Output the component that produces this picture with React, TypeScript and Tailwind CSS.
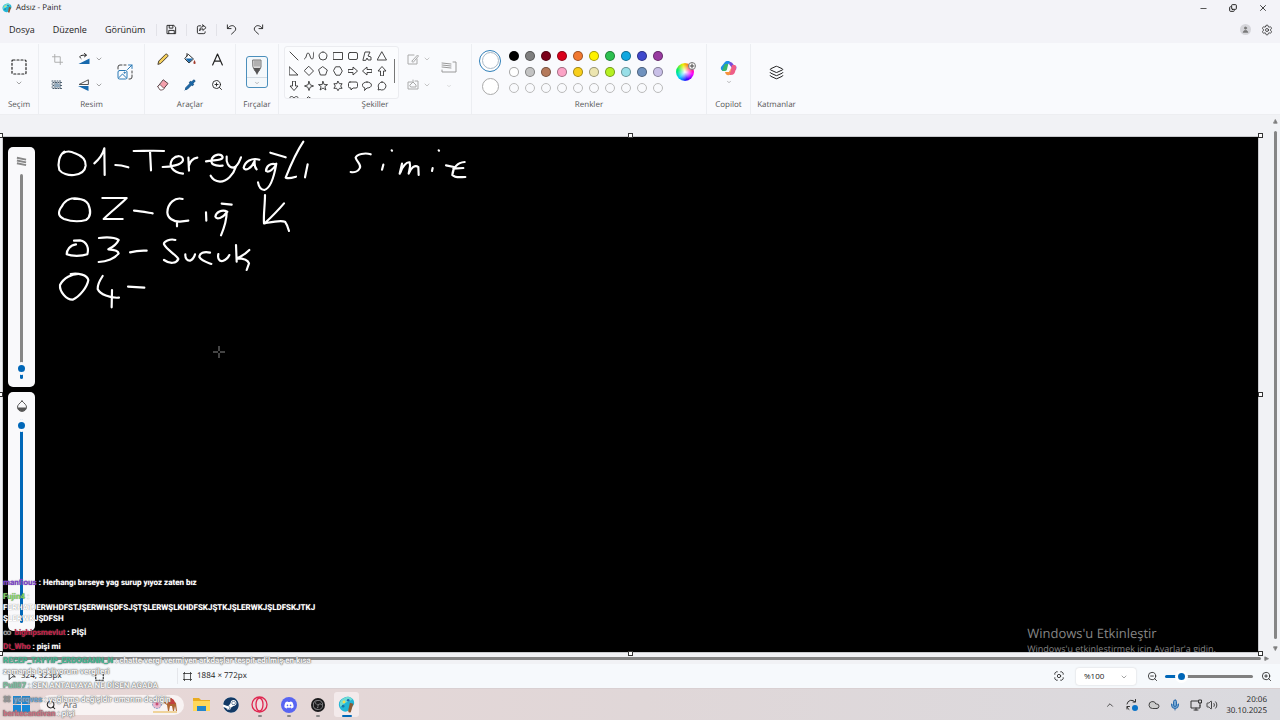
import type { ReactNode } from "react";
import clsx from "clsx";
import { ChevronDown, ChevronUp, Cloud, Copy, Layers, Mic, Minus, Pipette, Search, Settings, Volume2, X, ZoomIn, ZoomOut } from "lucide-react";
import { FaDiscord, FaSteam } from "react-icons/fa";
import { SiObsstudio } from "react-icons/si";

const palette = [
  ["#000000", "#7f7f7f", "#7a0019", "#d9001b", "#f07830", "#fff200", "#2dc050", "#12a8e0", "#3f48cc", "#983ba0"],
  ["#ffffff", "#c3c3c3", "#b57a5c", "#fba3c6", "#f8cf1c", "#ece5b0", "#b5f022", "#99dfe8", "#7092be", "#c8bfe7"],
];

const shapes = [
  "M1 1L9 9",
  "M0 8C3 8 2 2 4 2S6 8 8 8 9 4 10 1",
  "M5 1a4 4 0 1 0 0 8a4 4 0 1 0 0-8",
  "M.5 1.5h9v7h-9z",
  "M2 1.5h6a1.500 1.500 0 0 1 1.500 1.500v4a1.500 1.500 0 0 1-1.500 1.500H2A1.500 1.500 0 0 1 .5 7V3A1.500 1.500 0 0 1 2 1.500z",
  "M1 9L3 1h5L6 5l3 1v3H6L5 7 4 9z",
  "M5 1L9.500 9H.5z",
  "M.5 1L9 9H.5z",
  "M5 .5L9.500 5 5 9.500.5 5z",
  "M5 .8L9.300 4 7.600 9H2.400L.7 4z",
  "M3 .8h4L9.300 5 7 9.200H3L.7 5z",
  "M.5 3.500H5V1l4.500 4L5 9V6.500H.5z",
  "M9.500 3.500H5V1L.5 5 5 9V6.500h4.500z",
  "M3.500 9.500V5H1L5 .5 9 5H6.500v4.500z",
  "M3.500.5V5H1l4 4.500L9 5H6.500V.5z",
  "M5 .5L6.200 3.800 9.500 5 6.200 6.200 5 9.500 3.800 6.200.5 5l3.300-1.200z",
  "M5 .5l1.200 3.100h3.300L6.900 5.600l1 3.400L5 7 2.100 9l1-3.400L.5 3.600h3.300z",
  "M5 .3l1.400 2.400h2.700L7.700 5l1.400 2.300H6.400L5 9.700 3.600 7.300H.9L2.300 5 .9 2.700h2.700z",
  "M2 1h6a1.500 1.500 0 0 1 1.500 1.500v3A1.500 1.500 0 0 1 8 7H5L3 9V7H2A1.500 1.500 0 0 1 .5 5.500v-3A1.500 1.500 0 0 1 2 1z",
  "M5 1c6 0 6 6 0 6L2.500 9.500 3 7C-1.500 5.500 0 1 5 1z",
  "M5 1a4 4 0 1 1-2 7.500L1 9l.7-2A4 4 0 0 1 5 1z",
  "M5 9L1 5C-1 1 3-1 5 2c2-3 6-1 4 3z",
  "M4 1L1 4h2L2 9l6-4-2-1 1-1z",
];

/* One entry per pen stroke, in the drawing's own units (3 per pixel). */
const strokes = [
  "M193 80C178 90 172 115 178 135C185 145 205 152 222 150C240 148 255 140 257 122C258 105 245 92 225 85C212 78 200 78 190 84",
  "M283 115C295 105 308 90 313 70L314 150",
  "M346 120C358 120 372 123 385 127",
  "M401 78C430 78 460 76 492 78M450 78L453 136",
  "M488 126C510 126 545 120 549 106C549 90 530 90 517 103C505 120 515 142 549 146",
  "M565 98L567 137M566 124C570 108 578 100 592 98",
  "M618 109C640 104 668 108 668 96C664 85 645 87 636 100C628 118 645 124 668 122",
  "M680 95C678 112 685 128 700 128C714 125 718 110 723 97M708 124C700 150 680 170 660 170C645 168 636 160 632 152",
  "M778 104C755 97 735 110 731 128C735 140 755 130 764 108C763 120 764 128 770 133",
  "M828 118C810 112 798 126 798 138C806 144 822 132 829 116C824 145 814 190 793 195C780 194 776 183 774 172M811 83L857 97",
  "M910 50C890 80 870 125 857 158C868 162 878 158 888 155M923 118L915 157",
  "M1112 88C1095 82 1070 88 1067 98C1070 110 1084 118 1080 128C1075 140 1062 143 1052 141",
  "M1150 119L1146 134M1175 76L1176 77",
  "M1199 146L1206 116M1201 143C1206 125 1220 110 1229 112C1233 124 1227 136 1226 146C1232 128 1245 118 1255 126L1256 150",
  "M1298 129L1296 138M1316 76L1317 77",
  "M1338 121L1362 126M1394 111C1372 112 1358 130 1357 150C1366 160 1382 156 1396 156M1360 131L1390 129",
  "M240 222C215 215 195 225 185 245C172 262 175 275 192 282C215 290 240 290 258 285C273 275 272 255 265 238C258 225 240 220 222 222",
  "M307 219L380 219C360 240 330 262 311 282L368 282",
  "M402 257C420 258 440 262 458 265",
  "M548 222C525 215 503 235 502 262C503 280 520 290 540 290L565 287M531 290L531 304",
  "M618 262L619 287",
  "M682 260C665 252 648 262 646 275C650 285 668 280 680 262C680 285 672 310 663 331M665 236L695 239",
  "M795 210C795 240 790 270 792 295M852 235C835 255 810 280 794 295C820 290 840 285 855 290C862 300 865 310 867 318",
  "M228 358C210 360 200 375 200 388C215 394 245 394 262 388C267 370 262 350 240 346L222 347",
  "M297 339C320 336 345 338 356 345C350 358 335 368 325 373C340 374 355 378 356 385C345 400 320 410 296 411",
  "M390 382C405 378 420 376 440 377",
  "M526 345C510 340 490 350 492 358C500 375 530 390 535 402C530 415 510 418 492 405",
  "M556 388C555 400 562 408 570 407C580 403 583 395 585 388",
  "M630 383C612 378 598 385 598 396C605 408 620 412 634 417",
  "M655 387C652 400 658 410 668 408C680 404 685 397 688 390",
  "M708 360L710 410M748 375C735 388 720 396 711 400C730 400 744 405 747 415L740 435",
  "M240 447C215 445 190 460 180 480C178 500 200 525 218 524C240 515 262 485 265 465C262 450 235 443 212 447",
  "M308 453C298 468 292 480 293 492C300 508 330 520 357 518M336 495L335 547",
  "M384 485L433 488",
];

const messages = [
  { name: "manfious", color: "text-[#7d3fd0]", text: "Herhangı bırseye yag surup yıyoz zaten bız" },
  { name: "Fujin4", color: "text-[#7fd35c]", text: "FERHATJERWHDFSTJŞERWHŞDFSJŞTŞLERWŞLKHDFSKJŞTKJŞLERWKJŞLDFSKJTKJ ŞLERWKJŞDFSH" },
  { name: "bighipsmevlut", color: "text-[#c0143c]", text: "PİŞİ", badge: "∞" },
  { name: "Dt_Who", color: "text-[#c0143c]", text: "pişi mi" },
  { name: "RECEP_TAYYIP_ERDOGANN_N", color: "text-[#3fb893]", text: "chatte vergi vermiyen arkdaşlar tespit edilmiş en kısa zamanda bekliyorum vergileri", faded: true },
  { name: "Pull07", color: "text-[#7cc4a4]", text: "SEN ANTALYAYA NE DİSEN AGADA", faded: true },
  { name: "yorqves", color: "text-[#6fa8d8]", text: "yağlama değişldir umarım dediğin", badge: "⌘", faded: true },
  { name: "berkecandivan", color: "text-[#cc6f80]", text: "pişi", faded: true },
];

function Icon({ size = 12, box = 12, children, className }: { size?: number; box?: number; children: ReactNode; className?: string }) {
  return (
    <svg width={size} height={size} viewBox={`0 0 ${box} ${box}`} fill="none" stroke="currentColor" strokeLinejoin="round" strokeLinecap="round" className={clsx("shrink-0", className)}>
      {children}
    </svg>
  );
}

function IconButton({ label, className, children }: { label: string; className?: string; children: ReactNode }) {
  return (
    <button type="button" aria-label={label} className={clsx("grid shrink-0 place-items-center", className)}>
      {children}
    </button>
  );
}

function Chevron({ className }: { className?: string }) {
  return <ChevronDown size={8} strokeWidth={2} className={clsx("text-[#777]", className)} />;
}

function Group({ label, className, children }: { label: string; className: string; children: ReactNode }) {
  return (
    <section aria-label={label} className={clsx("flex shrink-0 flex-col border-r border-[#eceef2] pt-px", className)}>
      <div className="flex h-[54px] items-center justify-center">{children}</div>
      <p className="text-center text-[8px] leading-3 text-[#555]">{label}</p>
    </section>
  );
}

function PaintLogo({ size }: { size: number }) {
  return (
    <Icon size={size} box={20}>
      <path d="M7 2C12-1 19 2 19 8c0 4-3 5-5 5-2 1 0 4-3 5C6 20 1 15 1 10c0-4 2-6 6-8z" fill="#22b5d6" stroke="none" />
      <path d="M8 2C3 4 1 8 3 13l6-5 8-4c-2-3-6-4-9-2z" fill="#6fdcd4" stroke="none" />
      <path d="M14 8l4 1-3 10c-2 1-3 0-3-2z" fill="#8a5a34" stroke="none" />
      <circle cx="7" cy="7" r="1.600" fill="#f5d94e" stroke="none" />
      <circle cx="12" cy="5" r="1.600" fill="#1b69b0" stroke="none" />
      <circle cx="6" cy="12" r="1.600" fill="#1874a5" stroke="none" />
    </Icon>
  );
}

function TitleBar() {
  return (
    <header className="flex h-4 items-center bg-[#f3f3f8] pl-[2px] pr-[2px]">
      <PaintLogo size={10} />
      <h1 className="ml-1 flex-1 text-[8px] leading-4">Adsız - Paint</h1>
      <IconButton label="Simge durumuna küçült" className="h-4 w-[30px]"><Minus size={9} strokeWidth={2} /></IconButton>
      <IconButton label="Önceki boyut" className="h-4 w-[30px]"><Copy size={8} strokeWidth={3} className="-scale-x-100 rotate-180" /></IconButton>
      <IconButton label="Kapat" className="h-4 w-[30px]"><X size={10} strokeWidth={2} /></IconButton>
    </header>
  );
}

function MenuBar() {
  return (
    <nav className="flex h-[27px] items-center bg-[#f3f3f8] pl-[9px] pr-[7px]">
      <div className="flex gap-[18px] text-[9px]">
        <button type="button">Dosya</button>
        <button type="button">Düzenle</button>
        <button type="button">Görünüm</button>
      </div>
      <div className="ml-[11px] flex h-4 items-center">
        <IconButton label="Kaydet" className="h-3 w-[30px] border-l border-[#e2e2e8]">
          <Icon size={11}><path d="M1.500 1.500h7l2 2v7h-9zM3.500 1.500v3h4v-3M3 10.500V7h6v3.500" /></Icon>
        </IconButton>
        <IconButton label="Paylaş" className="h-3 w-[30px] border-l border-[#e2e2e8]">
          <Icon size={11}><path d="M5 2H3a1.500 1.500 0 0 0-1.500 1.500v5.500A1.500 1.500 0 0 0 3 10.500h5.500A1.500 1.500 0 0 0 10 9V8.500M7.500 1l3.500 3-3.500 3V5.300C5.500 5.300 4.500 6 4 7.500 4 4.500 5.500 3 7.500 2.800z" /></Icon>
        </IconButton>
        <IconButton label="Geri al" className="h-3 w-[30px] border-l border-[#e2e2e8]">
          <Icon size={11}><path d="M1.500 1v4h4M1.800 4.800C4 1.500 7.500 1 9.300 2.800c2 2 1.500 3.700 0 5.200L6 11" /></Icon>
        </IconButton>
        <IconButton label="Yinele" className="h-3 w-[24px]">
          <Icon size={11}><path d="M10.500 1v4h-4M10.200 4.800C8 1.500 4.500 1 2.700 2.800c-2 2-1.500 3.700 0 5.200L6 11" /></Icon>
        </IconButton>
      </div>
      <div className="ml-auto flex items-center gap-[10px]">
        <IconButton label="Hesap" className="size-[11px] rounded-full bg-[#d5d5da] text-[#777]">
          <Icon size={7}><circle cx="6" cy="3.500" r="2" fill="currentColor" /><path d="M2 11c0-5 8-5 8 0z" fill="currentColor" /></Icon>
        </IconButton>
        <IconButton label="Ayarlar" className="size-3"><Settings size={12} strokeWidth={1.5} /></IconButton>
      </div>
    </nav>
  );
}

function ImageTools() {
  return (
    <>
      <div className="grid grid-cols-[27px_26px] items-center gap-y-3">
        <IconButton label="Kırp" className="h-[14px] w-[14px] text-[#aaa]"><Icon size={11}><path d="M3 .5V9h8.500M.5 3H9v8.500" /></Icon></IconButton>
        <IconButton label="Döndür" className="h-[14px] w-[26px] grid-flow-col gap-1">
          <Icon><path d="M3 5.500C0 3 3 1.800 8 2.200M6.500.5l2 1.700-2 1.600" /><path d="M.5 11h11V5.500z" fill="#1769ad" stroke="none" /></Icon>
          <Chevron />
        </IconButton>
        <IconButton label="Arka planı kaldır" className="h-[14px] w-[14px] text-[#46586a]">
          <Icon><path d="M1 2h10M1 5h10M1 8h10M2 3.500h10M2 6.500h10M2 9.500h10" strokeDasharray="1 1.500" strokeWidth="1.200" /><path d="M3 8l2-4 3 1 1 3z" fill="#8fa8bd" stroke="none" /></Icon>
        </IconButton>
        <IconButton label="Çevir" className="h-[14px] w-[26px] grid-flow-col gap-1">
          <Icon><path d="M10 1L1 5.500h9z" stroke="#555" /><path d="M10.500 12L0 7h10.500z" fill="#1769ad" stroke="none" /></Icon>
          <Chevron />
        </IconButton>
      </div>
      <IconButton label="Yeniden boyutlandır" className="ml-[14px] size-4">
        <Icon size={16} box={16}>
          <path d="M1 5V3a2 2 0 0 1 2-2h2M7 1h2M15 7v2M15 11v2a2 2 0 0 1-2 2h-1" stroke="#444" />
          <path d="M10.500 5.500L15 1M11.500 1H15v3.500M2.500 6.500h6a1.500 1.500 0 0 1 1.500 1.500v5.500a1.500 1.500 0 0 1-1.500 1.500h-6A1.500 1.500 0 0 1 1 13.500V8a1.500 1.500 0 0 1 1.500-1.500zM1.500 14l4-4 4 4" stroke="#2879b5" />
          <circle cx="7.500" cy="8.700" r=".6" stroke="#2879b5" />
        </Icon>
      </IconButton>
    </>
  );
}

function DrawTools() {
  return (
    <div className="grid grid-cols-[14px_14px_14px] gap-x-[13px] gap-y-3">
      <IconButton label="Kalem" className="size-[14px]"><Icon><path d="M1 11l.8-3L8.500 1.300c1-1 3.200 1 2.200 2.200L4 10.200z" fill="#f4cf5c" stroke="#4b4030" /></Icon></IconButton>
      <IconButton label="Doldur" className="size-[14px]">
        <Icon><path d="M4.500 1.500L9.500 6 5 10 1 6z" fill="#fff" stroke="#333" /><path d="M1.500 5.500h7.500L5 9.500z" fill="#1769ad" stroke="none" /><path d="M3 3V.5" stroke="#333" /><path d="M10.500 7c1.500 2.500 1.500 4 0 4s-1.500-1.500 0-4z" fill="#a33a2c" stroke="none" /></Icon>
      </IconButton>
      <IconButton label="Metin" className="size-[14px]"><Icon size={13}><path d="M1.500 11L6 1l4.500 10M3 7.500h6" strokeWidth="1.100" /></Icon></IconButton>
      <IconButton label="Silgi" className="size-[14px]"><Icon><path d="M6.500 1L11 4.500 6 10.500H3.500L1 8z" fill="#f4a0ac" stroke="#5a4045" /><path d="M3 5.500L7 9.500 5.500 11H3L1 8z" fill="#fff" stroke="#5a4045" strokeWidth=".8" /></Icon></IconButton>
      <IconButton label="Renk seçici" className="size-[14px]"><Pipette size={12} className="fill-[#1769ad] text-[#1d5586]" /></IconButton>
      <IconButton label="Büyüteç" className="size-[14px]"><ZoomIn size={12} strokeWidth={1.8} /></IconButton>
    </div>
  );
}

function Ribbon() {
  return (
    <div role="toolbar" aria-label="Araç çubuğu" className="flex h-[72px] overflow-hidden border-b border-[#edeef1] bg-[#f9fafd] pt-px">
      <Group label="Seçim" className="w-[39px]">
        <IconButton label="Seçim aracı" className="gap-1 pt-px">
          <Icon size={16} box={16}><rect x="1" y="1" width="14" height="14" rx="1" strokeDasharray="2 2" strokeWidth="1.200" /></Icon>
          <Chevron />
        </IconButton>
      </Group>
      <Group label="Resim" className="w-[106px]"><ImageTools /></Group>
      <Group label="Araçlar" className="w-[91px]"><DrawTools /></Group>
      <Group label="Fırçalar" className="w-[43px]">
        <button type="button" aria-label="Fırçalar" className="flex h-8 w-[22px] flex-col items-center justify-between rounded-[3px] border border-[#4b8fbc] bg-[#f4f8fb] pt-[2px]">
          <Icon size={16} box={16}>
            <path d="M4 1h8v7l-2 4H6L4 8z" fill="#d8d8d8" stroke="#777" />
            <path d="M6 2v5M8 2v5M10 2v5" stroke="#8a8a8a" />
            <path d="M4.500 9h7L10 12l-2 4-2-4z" fill="#555" stroke="none" />
          </Icon>
          <span className="grid h-[10px] w-full place-items-center border-t border-[#d3dbe2]"><Chevron className="size-[6px]" /></span>
        </button>
      </Group>
      <Group label="Şekiller" className="w-[193px]">
        <div className="relative h-[53px] w-[115px] overflow-hidden rounded-[3px] border border-[#ebecf0] bg-[#fbfcfe]">
          <div className="grid w-[105px] grid-cols-7 gap-y-[5px] pl-[2px] pt-[4px] text-[#333]">
            {shapes.map((d) => (
              <IconButton key={d} label="Şekil" className="h-[10px]"><Icon size={10} box={10}><path d={d} strokeWidth=".9" /></Icon></IconButton>
            ))}
          </div>
          <span className="absolute right-[3px] top-[12px] h-6 w-px bg-[#777]" />
        </div>
        <div className="ml-2 grid gap-y-3 text-[#aaa]">
          <IconButton label="Şekil anahattı" className="h-[14px] w-6 grid-flow-col gap-1">
            <Icon><path d="M7 2H1v9h9V6M5 8l5.500-6 1 1L6.500 9z" /></Icon><Chevron className="text-[#aaa]" />
          </IconButton>
          <IconButton label="Şekil dolgusu" className="h-[14px] w-6 grid-flow-col gap-1">
            <Icon><path d="M5 3H1v7h10V2H8M3 6l3-3 3 3v2H4zM6 3V1" /></Icon><Chevron className="text-[#aaa]" />
          </IconButton>
        </div>
        <IconButton label="Boyut" className="ml-[10px] mr-[10px] gap-2 pt-1 text-[#999]">
          <Icon size={16} box={16}><path d="M12 3h3v10H1v-2M1 4l9 1M1 6l9 1M1 8l9 1" /></Icon>
          <Chevron className="size-[6px] text-[#bbb]" />
        </IconButton>
      </Group>
      <Group label="Renkler" className="w-[235px]">
        <div className="flex w-full items-center pl-[7px]">
          <div className="flex w-[22px] flex-col items-center gap-[6px]">
            <button type="button" aria-label="Renk 1" className="grid size-[22px] place-items-center rounded-full border border-[#2f7fb8] bg-white"><span className="size-[17px] rounded-full border border-[#a9b9c6]" /></button>
            <button type="button" aria-label="Renk 2" className="size-[17px] rounded-full border border-[#aaa] bg-white" />
          </div>
          <div className="ml-2 grid grid-cols-10 gap-[6px]">
            {palette.flat().map((color) => (
              <button key={color} type="button" aria-label={color} className="size-[10px] rounded-full border border-black/35" style={{ backgroundColor: color }} />
            ))}
            {palette[0].map((color) => (
              <button key={color} type="button" aria-label="Boş renk" className="size-[10px] rounded-full border border-[#bbb]" />
            ))}
          </div>
          <button type="button" aria-label="Renkleri düzenle" className="relative ml-[13px] size-[18px] rounded-full bg-[radial-gradient(circle,white,transparent_60%),conic-gradient(from_45deg,#f33,#f0f,#30f,#0cf,#0e6,#ee0,#f33)]">
            <span className="absolute -right-[2px] -top-[1px] grid size-2 place-items-center rounded-full border border-[#777] bg-white"><Icon size={6} box={6}><path d="M3 1v4M1 3h4" stroke="#444" /></Icon></span>
          </button>
        </div>
      </Group>
      <Group label="Copilot" className="w-[44px]">
        <IconButton label="Copilot" className="gap-[2px]">
          <Icon size={17} box={17}>
            <path d="M5 2c.5-1 5-2 6 1l-3 1c-1 0-1.500 1-2 3l-1 4c-4 0-4.500-2-4-4z" fill="#1c8fe8" stroke="none" />
            <path d="M2 11h3c1.500 0 2-1 2.300-3l1-4H5L3.500 7z" fill="#37b56d" stroke="none" />
            <path d="M10 2c3 0 3 3 5 4 2 0 1.500 2 1 4l-4-2-3-4z" fill="#7a4bd8" stroke="none" />
            <path d="M12 5h3c2 1 1 4 0 7-1 3-3 3-6 3l2-6z" fill="#ee5d87" stroke="none" />
            <path d="M5 12h4l2-4-1 6c-1 2-4 2-5-2z" fill="#f6953c" stroke="none" />
          </Icon>
          <Chevron className="size-[6px]" />
        </IconButton>
      </Group>
      <Group label="Katmanlar" className="w-[51px] border-r-0">
        <IconButton label="Katmanlar"><Layers size={15} strokeWidth={1.6} /></IconButton>
      </Group>
    </div>
  );
}

const verticalRange =
  "w-[13px] appearance-none bg-transparent [writing-mode:vertical-lr] [direction:rtl] [&::-webkit-slider-runnable-track]:w-[3px] [&::-webkit-slider-runnable-track]:rounded-full [&::-webkit-slider-thumb]:-ml-[5px] [&::-webkit-slider-thumb]:size-[13px] [&::-webkit-slider-thumb]:appearance-none [&::-webkit-slider-thumb]:rounded-full [&::-webkit-slider-thumb]:border-[3px] [&::-webkit-slider-thumb]:border-[#f9f9fb] [&::-webkit-slider-thumb]:bg-[#0067b8]";

function SidePanels() {
  return (
    <div className="absolute left-[5px] top-[10px] flex flex-col gap-[5px]">
      <div className="flex h-[240px] w-[27px] flex-col items-center rounded-[5px] bg-[#f9f9fb] pt-2">
        <Icon size={11}><path d="M1 3l10 2M1 6l10 2M1 9l10 2" stroke="#888" strokeWidth="2" strokeLinecap="butt" /></Icon>
        <input type="range" aria-label="Boyut" defaultValue={2} className={clsx(verticalRange, "mt-2 h-[205px] [&::-webkit-slider-runnable-track]:bg-[linear-gradient(to_top,#0067b8_10px,#868686_10px)]")} />
      </div>
      <div className="flex h-[239px] w-[27px] flex-col items-center rounded-[5px] bg-[#f9f9fb] pt-2">
        <Icon><path d="M6 1C3 4 1.500 5 1.500 7.200a4.500 4.200 0 0 0 9 0C10.500 5 9 4 6 1z" stroke="#555" /><path d="M1.500 7.500h9c-1 5-8 5-9 0z" fill="#555" stroke="none" /></Icon>
        <input type="range" aria-label="Opaklık" defaultValue={100} className={clsx(verticalRange, "mt-[7px] h-[204px] [&::-webkit-slider-runnable-track]:bg-[#0067b8]")} />
      </div>
    </div>
  );
}

function Handle({ className }: { className: string }) {
  return <span className={clsx("absolute size-[5px] border border-[#333] bg-white", className)} />;
}

function Workspace() {
  return (
    <main className="flex min-h-0 flex-1 flex-col bg-[#f1f2f5]">
      <div className="flex min-h-0 flex-1">
        <div className="flex min-w-0 flex-1 pl-[3px] pt-[22px]">
          <div className="relative min-w-0 flex-1 bg-black outline outline-[#c9cacd]">
            <svg width="500" height="192" viewBox="9 36 1500 576" fill="none" stroke="white" strokeWidth="6.500" strokeLinecap="round" strokeLinejoin="round">
              {strokes.map((d) => <path key={d} d={d} />)}
            </svg>
            <Icon size={12} className="absolute left-[210px] top-[209px] text-[#888]"><path d="M6 0v5M6 7v5M0 6h5M7 6h5" strokeLinecap="butt" /></Icon>
            <SidePanels />
            <div className="absolute bottom-0 right-[42px] h-[28px] overflow-hidden text-[#858585]">
              <p className="text-[13px] leading-[18px]">Windows'u Etkinleştir</p>
              <p className="text-[9px] leading-[14px]">Windows'u etkinleştirmek için Ayarlar'a gidin.</p>
            </div>
            <Handle className="-left-[5px] -top-[4px]" />
            <Handle className="-top-[4px] left-1/2 -ml-[3px]" />
            <Handle className="-right-[5px] -top-[4px]" />
            <Handle className="-left-[5px] top-1/2 -mt-[3px]" />
            <Handle className="-right-[5px] top-1/2 -mt-[3px]" />
            <Handle className="-bottom-[4px] -left-[5px]" />
            <Handle className="-bottom-[4px] left-1/2 -ml-[3px]" />
            <Handle className="-bottom-[4px] -right-[5px]" />
          </div>
        </div>
        <div className="flex w-[22px] flex-col items-end gap-[7px] pb-px pr-[2px] pt-1 text-[#7b7b7b]">
          <Icon size={5} box={6}><path d="M3 1l2 4H1z" fill="currentColor" /></Icon>
          <span className="mr-[1px] w-[3px] flex-1 rounded-full bg-[#858585]" />
          <Icon size={5} box={6}><path d="M3 5l2-4H1z" fill="currentColor" /></Icon>
        </div>
      </div>
      <div className="flex h-3 shrink-0 items-center gap-[3px] pl-3 pr-[11px] text-[#7b7b7b]">
        <span className="h-[3px] flex-1 rounded-full bg-[#858585]" />
        <Icon size={5} box={6}><path d="M5 3L1 1v4z" fill="currentColor" /></Icon>
      </div>
    </main>
  );
}

function StatusBar() {
  return (
    <footer className="flex h-6 shrink-0 items-center bg-[#f6f9fc] pl-[7px] pr-2 text-[8px]">
      <Icon size={10}><path d="M3 1l7 6H6l-3 3z" /></Icon>
      <span className="ml-1 w-[74px]">324, 323px</span>
      <Icon size={9}><rect x="1" y="1" width="10" height="10" strokeDasharray="2 2" strokeWidth="1.500" /></Icon>
      <span className="ml-[73px] h-4 border-l border-[#e5e7eb]" />
      <Icon size={9} className="ml-[5px]"><path d="M2 2h8v8H2zM0 2h2V0M12 2h-2V0M0 10h2v2M12 10h-2v2" /></Icon>
      <span className="ml-[5px]">1884 × 772px</span>
      <div className="ml-auto flex items-center">
        <IconButton label="Ekrana sığdır"><Icon size={10}><path d="M1 4V2.500L2.500 1H4M8 1h1.500L11 2.500V4M11 8v1.500L9.500 11H8M4 11H2.500L1 9.500V8" /><circle cx="6" cy="6" r="2" /></Icon></IconButton>
        <div className="relative ml-3">
          <select aria-label="Yakınlaştırma" className="h-[17px] w-[60px] appearance-none rounded-[3px] bg-white pl-[8px] text-[8px] shadow-[0_0_2px_#ccc]"><option>%100</option></select>
          <Chevron className="pointer-events-none absolute right-2 top-[5px]" />
        </div>
        <IconButton label="Uzaklaştır" className="ml-[11px]"><ZoomOut size={11} strokeWidth={1.8} /></IconButton>
        <input type="range" aria-label="Yakınlaştırma düzeyi" defaultValue={13} className="ml-[7px] h-[13px] w-[88px] appearance-none bg-transparent [&::-webkit-slider-runnable-track]:h-[3px] [&::-webkit-slider-runnable-track]:rounded-full [&::-webkit-slider-runnable-track]:bg-[linear-gradient(to_right,#0067b8_15px,#808080_15px)] [&::-webkit-slider-thumb]:-mt-[5px] [&::-webkit-slider-thumb]:size-[13px] [&::-webkit-slider-thumb]:appearance-none [&::-webkit-slider-thumb]:rounded-full [&::-webkit-slider-thumb]:border-[3px] [&::-webkit-slider-thumb]:border-white [&::-webkit-slider-thumb]:bg-[#0067b8]" />
        <IconButton label="Yakınlaştır" className="ml-2"><ZoomIn size={11} strokeWidth={1.8} /></IconButton>
      </div>
    </footer>
  );
}

function TaskButton({ label, running, active, children }: { label: string; running?: boolean; active?: boolean; children: ReactNode }) {
  return (
    <button type="button" aria-label={label} className={clsx("relative grid h-[25px] w-[25px] place-items-center rounded-[3px]", active && "bg-[#f3eaeb]")}>
      {children}
      {(running || active) && <span className={clsx("absolute bottom-0 h-[2px] rounded-full", active ? "w-[10px] bg-[#0067b8]" : "w-[4px] bg-[#888]")} />}
    </button>
  );
}

function Taskbar() {
  return (
    <footer className="flex h-8 shrink-0 items-center border-t border-[#d9d0d2] bg-linear-to-r from-[#e9d7d6] via-[#e0d7d8] to-[#dadadf] pl-[13px] pr-[13px]">
      <IconButton label="Başlat">
        <Icon size={17} box={17}><path d="M0 0h8v8H0zM9 0h8v8H9zM0 9h8v8H0zM9 9h8v8H9z" fill="#1689d8" stroke="none" /></Icon>
      </IconButton>
      <label className="ml-[10px] flex h-5 w-[144px] items-center rounded-full bg-[#f8f3f3] pl-[6px] pr-[5px]">
        <Search size={10} strokeWidth={2.5} />
        <input aria-label="Ara" placeholder="Ara" className="ml-[7px] w-0 flex-1 bg-transparent text-[9px] outline-none placeholder:text-[#666]" />
        <svg width="28" height="18" viewBox="0 0 28 18">
          <circle cx="6" cy="8" r="4.500" fill="#e9b7cf" stroke="#7d9fc6" strokeDasharray="2 1" />
          <circle cx="6" cy="8" r="1.500" fill="#c94f75" />
          <path d="M2 15h24v2H2z" fill="#efd39b" />
          <path d="M11 3l3-1 1 5 1 1 2-4 2-2 2 2 3 3 1 8h-1l-1-5-1 5h-1l-1-5h-2l-1 5h-1l-1-6-3-2-1-4h-2z" fill="#ad6633" />
          <path d="M18 4l2-2 3 2 1 4h-6z" fill="#c33f3f" />
        </svg>
      </label>
      <div className="ml-[5px] flex gap-1">
        <TaskButton label="Dosya Gezgini">
          <Icon size={17} box={17}><path d="M0 2h6l2 2h9v11H0z" fill="#e9ab20" stroke="none" /><path d="M0 5h17v10H0z" fill="#ffd75a" stroke="none" /><path d="M4 10h9v5H4z" fill="#2486cc" stroke="none" /></Icon>
        </TaskButton>
        <TaskButton label="Steam"><span className="rounded-full bg-white"><FaSteam size={16} color="#143a66" /></span></TaskButton>
        <TaskButton label="Opera GX" running>
          <Icon size={17} box={17}><circle cx="8.500" cy="8.500" r="7.500" stroke="#e0254f" strokeWidth="1.300" /><ellipse cx="8.500" cy="8.500" rx="3.500" ry="6.500" stroke="#e0254f" strokeWidth="1.300" fill="#f4dce0" /></Icon>
        </TaskButton>
        <TaskButton label="Discord" running><span className="grid size-4 place-items-center rounded-full bg-[#5865f2]"><FaDiscord size={10} color="white" /></span></TaskButton>
        <TaskButton label="OBS Studio" running><span className="grid size-[14px] place-items-center rounded-full bg-[#1c1c1e]"><SiObsstudio size={10} color="#c8c8cc" /></span></TaskButton>
        <TaskButton label="Paint" active><PaintLogo size={17} /></TaskButton>
      </div>
      <div className="ml-auto flex items-center text-[#333]">
        <ChevronUp size={10} />
        <Icon size={12} className="ml-[11px]"><path d="M1 5a4.500 4.500 0 0 1 8-2M9.500.5V3H7M3 10.500A5 5 0 0 1 1 8M1 10V7.500h2.500" /><circle cx="9" cy="9" r="3" fill="#0a74c8" stroke="none" /></Icon>
        <Cloud size={12} strokeWidth={1.8} className="ml-[10px] fill-[#ccc]" />
        <Mic size={12} className="ml-[9px] fill-[#75a7d4] text-[#2c6baa]" />
        <Icon size={12} className="ml-[9px]"><path d="M8 2H1v7h9V6.500M4 11h4M6 9v2M9 1h2.500v3H9zM10 4v3" /></Icon>
        <Volume2 size={12} strokeWidth={1.8} className="ml-1" />
        <time className="ml-2 text-right text-[8px] leading-[11px] text-[#222]">20:06<br />30.10.2025</time>
      </div>
    </footer>
  );
}

function ChatOverlay() {
  return (
    <ul className="pointer-events-none absolute bottom-px left-[3px] flex w-[316px] flex-col gap-[3px] font-['Roboto',sans-serif] text-[8px] font-bold leading-[11px]">
      {messages.map((m) => (
        <li key={m.name} className={clsx("wrap-break-word", m.faded ? "text-[#f4f4f4] [text-shadow:0_0_1px_#777,0_0_1px_#777,0_0_2px_#888]" : "text-white [text-shadow:0_0_1px_#777]")}>
          {m.badge && <span className="mr-[3px] text-[#999]">{m.badge}</span>}
          <span className={m.color}>{m.name}</span> : {m.text}
        </li>
      ))}
    </ul>
  );
}

export default function App() {
  return (
    <div className="relative flex h-screen flex-col overflow-hidden bg-[#f3f3f8] font-['Open_Sans','Noto_Sans',sans-serif] text-[#222] [text-rendering:geometricPrecision]">
      <TitleBar />
      <MenuBar />
      <Ribbon />
      <Workspace />
      <StatusBar />
      <Taskbar />
      <ChatOverlay />
    </div>
  );
}
